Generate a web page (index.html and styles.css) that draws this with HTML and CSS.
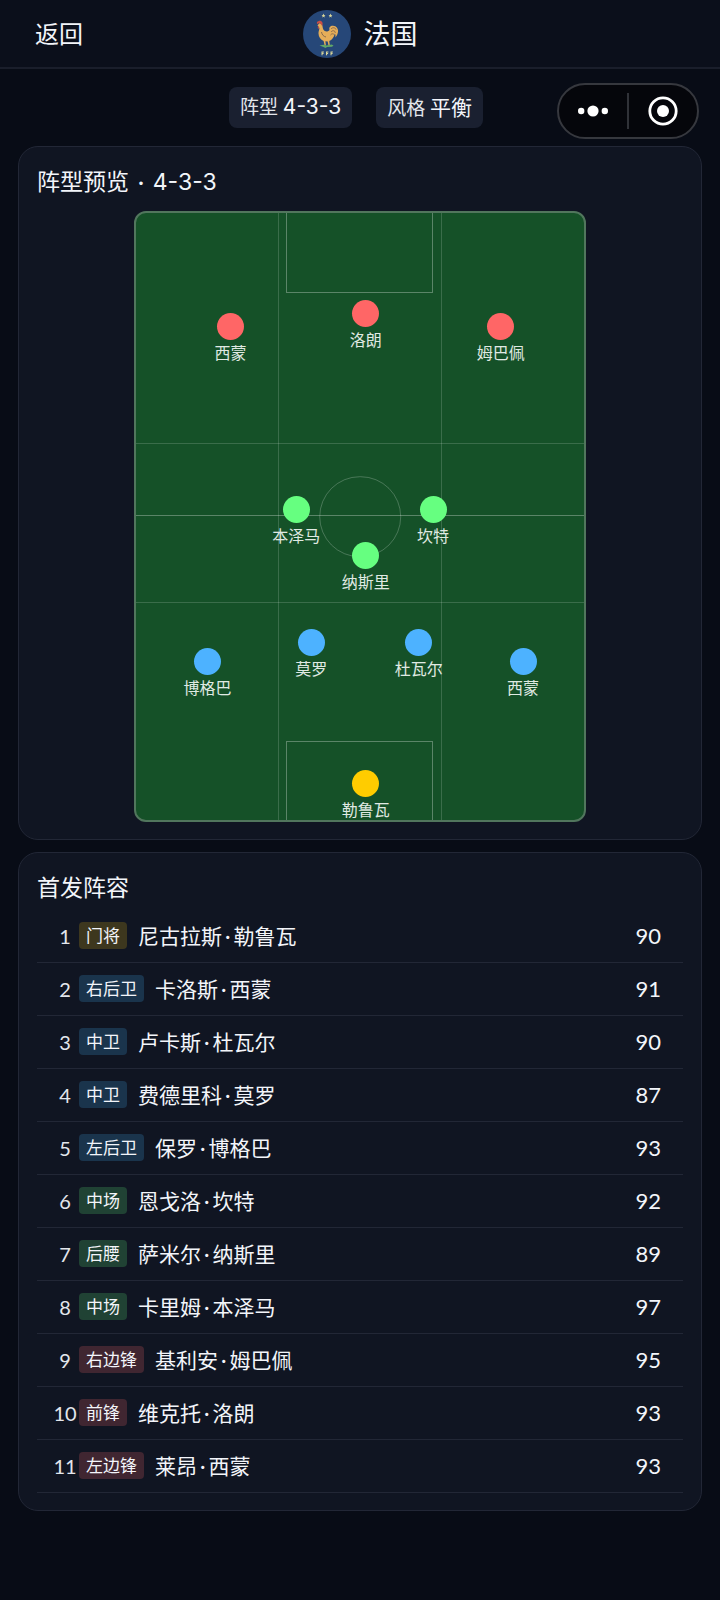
FILE: index.html
```html
<!DOCTYPE html>
<html lang="zh-CN">
<head>
<meta charset="utf-8">
<meta name="viewport" content="width=device-width, initial-scale=1">
<title>法国</title>
<link rel="stylesheet" href="styles.css">
</head>
<body>
<header class="topbar">
  <button class="back" type="button">返回</button>
  <div class="team">
    <svg class="crest" viewBox="0 0 48 48" aria-hidden="true">
      <circle cx="24" cy="24" r="24" fill="#264778"/>
      <g fill="#d9d69a">
        <path d="M20.5 3.600l.6 1.300 1.300.1-1 1 .3 1.400-1.200-.7-1.200.7.3-1.400-1-1 1.300-.1zM27.500 3.600l.6 1.300 1.300.1-1 1 .3 1.400-1.200-.7-1.200.7.3-1.400-1-1 1.300-.1z"/>
        <path d="M18.500 41.500h2.400v1h-1.300v.6h1v.8h-1v1.400h-1.100zM23 41.500h2.400v1h-1.300v.6h1v.8h-1v1.400H23zM27.500 41.500h2.400v1h-1.300v.6h1v.8h-1v1.400h-1.100z"/>
      </g>
      <path d="M14.500 15.500l2-2.500 2 .8c1.500 1.800.8 4.200 2 6 1.500 2.200 4.500 2.200 6 .2-.8-2.500.8-4.300 3.500-4.200 3.500.2 5.500 3 5 6.200-.3 2.300-1.300 4-2.600 5.400.2-1.700.1-2.900-.6-3.600-.8 3.700-2.800 6.200-5.500 7.200l.5 4.600h-1.300l-.8-4.200-2.300-.1.5 4.300h-1.300l-1-4.600c-3-1.300-5-4-5.100-7.500-.1-2.200.8-3.500.9-5.500z" fill="#e5ad59"/>
      <path d="M28 19c1.500-2 4.500-1.500 5 .6M28 22c1.500-2 4-1.600 4.300.8M27.500 25c1.200-1.500 2.600-1.500 3.400-.6M18.500 22c.4 2.600 2 4.500 4.500 5" fill="none" stroke="#8b6b4c" stroke-width="1"/>
      <path d="M14.200 14c-.8-1.200-.2-2.600 1.200-2.800 1.400-.8 3.400-.2 4 1.300.5 1.300.2 2.500-.4 3.300l-1.400-2-2-.6zM15.300 16c.8.6.9 2.200.1 3-.8-.7-.9-2-.1-3z" fill="#c94e45"/>
      <path d="M16.500 35.500l4-.8 3 .8 5-1 2 1-1.500 1.200-5 .4-1.500.8-2-1z" fill="#62a768"/>
    </svg>
    <h1 class="team-name">法国</h1>
  </div>
</header>

<div class="capsule">
  <button class="capsule-btn" type="button" aria-label="更多">
    <svg width="30" height="12" viewBox="0 0 30 12" fill="#fff"><circle cx="3.200" cy="6" r="3.200"/><circle cx="15" cy="6" r="5.600"/><circle cx="26.800" cy="6" r="3.200"/></svg>
  </button>
  <span class="capsule-rule"></span>
  <button class="capsule-btn" type="button" aria-label="关闭">
    <svg width="30" height="30" viewBox="0 0 30 30"><circle cx="15" cy="15" r="13.200" fill="none" stroke="#fff" stroke-width="2.800"/><circle cx="15" cy="15" r="6" fill="#fff"/></svg>
  </button>
</div>

<main class="page">
  <div class="chips">
    <div class="chip">阵型 <span class="chip-value formation">4-3-3</span></div>
    <div class="chip">风格 <span class="chip-value">平衡</span></div>
  </div>

  <section class="card">
    <h2 class="card-title">阵型预览 <span class="sep">·</span> <span class="formation">4-3-3</span></h2>
    <div class="pitch">
      <i class="line v" style="left:31.600%"></i>
      <i class="line v" style="left:68%"></i>
      <i class="line h" style="top:37.900%"></i>
      <i class="line h mid" style="top:49.800%"></i>
      <i class="line h" style="top:64%"></i>
      <i class="circle"></i>
      <i class="box top"></i>
      <i class="box bottom"></i>
      <div class="player fw" style="left:21.100%;top:18.600%">西蒙</div>
      <div class="player fw" style="left:51.300%;top:16.400%">洛朗</div>
      <div class="player fw" style="left:81.400%;top:18.600%">姆巴佩</div>
      <div class="player mf" style="left:35.800%;top:48.700%">本泽马</div>
      <div class="player mf" style="left:66.300%;top:48.700%">坎特</div>
      <div class="player mf" style="left:51.300%;top:56.400%">纳斯里</div>
      <div class="player df" style="left:16%;top:73.700%">博格巴</div>
      <div class="player df" style="left:39.100%;top:70.600%">莫罗</div>
      <div class="player df" style="left:63.100%;top:70.600%">杜瓦尔</div>
      <div class="player df" style="left:86.400%;top:73.700%">西蒙</div>
      <div class="player gk" style="left:51.300%;top:93.800%">勒鲁瓦</div>
    </div>
  </section>

  <section class="card">
    <h2 class="card-title" id="lineup">首发阵容</h2>
    <table class="roster" aria-labelledby="lineup">
      <tbody>
        <tr><td class="num">1</td><td><div class="who"><span class="tag gk">门将</span><span>尼古拉斯<span class="dot">·</span>勒鲁瓦</span></div></td><td class="score">90</td></tr>
        <tr><td class="num">2</td><td><div class="who"><span class="tag df">右后卫</span><span>卡洛斯<span class="dot">·</span>西蒙</span></div></td><td class="score">91</td></tr>
        <tr><td class="num">3</td><td><div class="who"><span class="tag df">中卫</span><span>卢卡斯<span class="dot">·</span>杜瓦尔</span></div></td><td class="score">90</td></tr>
        <tr><td class="num">4</td><td><div class="who"><span class="tag df">中卫</span><span>费德里科<span class="dot">·</span>莫罗</span></div></td><td class="score">87</td></tr>
        <tr><td class="num">5</td><td><div class="who"><span class="tag df">左后卫</span><span>保罗<span class="dot">·</span>博格巴</span></div></td><td class="score">93</td></tr>
        <tr><td class="num">6</td><td><div class="who"><span class="tag mf">中场</span><span>恩戈洛<span class="dot">·</span>坎特</span></div></td><td class="score">92</td></tr>
        <tr><td class="num">7</td><td><div class="who"><span class="tag mf">后腰</span><span>萨米尔<span class="dot">·</span>纳斯里</span></div></td><td class="score">89</td></tr>
        <tr><td class="num">8</td><td><div class="who"><span class="tag mf">中场</span><span>卡里姆<span class="dot">·</span>本泽马</span></div></td><td class="score">97</td></tr>
        <tr><td class="num">9</td><td><div class="who"><span class="tag fw">右边锋</span><span>基利安<span class="dot">·</span>姆巴佩</span></div></td><td class="score">95</td></tr>
        <tr><td class="num">10</td><td><div class="who"><span class="tag fw">前锋</span><span>维克托<span class="dot">·</span>洛朗</span></div></td><td class="score">93</td></tr>
        <tr><td class="num">11</td><td><div class="who"><span class="tag fw">左边锋</span><span>莱昂<span class="dot">·</span>西蒙</span></div></td><td class="score">93</td></tr>
      </tbody>
    </table>
  </section>
</main>
</body>
</html>
```
FILE: styles.css
```css
* { box-sizing: border-box; }

body {
  margin: 0;
  min-height: 100vh;
  background: #080c16;
  color: #f3f5fa;
  font-family: Lato, "Noto Sans CJK SC", sans-serif;
}

h1, h2 { margin: 0; font-weight: 400; }

button {
  padding: 0;
  border: 0;
  background: none;
  color: inherit;
  font: inherit;
}

.formation { font-family: Inter, "Noto Sans CJK SC", sans-serif; }

/* Top bar */
.topbar {
  display: grid;
  grid-template-columns: 1fr auto 1fr;
  align-items: center;
  height: 69px;
  padding: 1px 35px 0;
  border-bottom: 2px solid #1a1e2b;
  background: #0b0f1b;
}
.back { justify-self: start; font-size: 24px; line-height: 34px; }
.team { display: flex; align-items: center; gap: 13px; }
.crest { width: 48px; height: 48px; }
.team-name { font-size: 27px; line-height: 40px; }

/* Floating capsule */
.capsule {
  position: absolute;
  top: 83px;
  right: 21px;
  display: flex;
  align-items: center;
  width: 142px;
  height: 56px;
  border: 2px solid #36383e;
  border-radius: 28px;
  background: #05060b;
}
.capsule-btn { flex: 1; display: flex; align-items: center; justify-content: center; height: 100%; }
.capsule-rule { width: 2px; height: 36px; background: #303238; }

.page { display: flex; flex-direction: column; gap: 12px; padding: 18px 18px 24px; }

/* Chips */
.chips { display: flex; justify-content: center; gap: 24px; margin: 0 8px 6px 0; }
.chip {
  padding: 0 11px;
  border-radius: 8px;
  background: #1a2030;
  font-size: 19px;
  line-height: 40px;
  color: #e3e6ec;
}
.chip-value { font-size: 21px; color: #f3f5fa; }

/* Cards */
.card {
  padding: 17px 18px;
  border: 1px solid #222736;
  border-radius: 20px;
  background: #101522;
}
.card-title { font-size: 23px; line-height: 34px; }
.sep { margin: 0 3px; }

/* Pitch */
.pitch {
  position: relative;
  width: 70%;
  margin: 12px auto 0;
  aspect-ratio: 452 / 611;
  border: 2px solid #51765d;
  border-radius: 12px;
  background: #155128;
}
.line { position: absolute; background: rgba(255, 255, 255, .16); }
.line.v { top: 0; bottom: 0; width: 1px; }
.line.h { left: 0; right: 0; height: 1px; }
.line.mid { background: rgba(255, 255, 255, .3); }
.circle {
  position: absolute;
  left: 50.1%;
  top: 50%;
  width: 18.2%;
  aspect-ratio: 1;
  border: 1px solid rgba(255, 255, 255, .22);
  border-radius: 50%;
  transform: translate(-50%, -50%);
}
.box {
  position: absolute;
  left: 33.6%;
  width: 32.6%;
  height: 13.1%;
  border: 1px solid rgba(255, 255, 255, .3);
}
.box.top { top: 0; border-top: 0; }
.box.bottom { bottom: 0; border-bottom: 0; }

.player {
  position: absolute;
  display: flex;
  flex-direction: column;
  align-items: center;
  gap: 2px;
  margin-top: -13px;
  transform: translateX(-50%);
  font-size: 16px;
  line-height: 22px;
  white-space: nowrap;
  color: #e0eae3;
}
.player::before {
  content: "";
  width: 27px;
  height: 27px;
  border-radius: 50%;
}
.player.fw::before { background: #ff6666; }
.player.mf::before { background: #66ff80; }
.player.df::before { background: #4db2ff; }
.player.gk::before { background: #ffcc00; }

/* Lineup */
.roster { width: 100%; margin-top: 5px; border-collapse: collapse; font-size: 21px; }
.roster tr { height: 53px; border-bottom: 1px solid #222736; }
.roster td { padding: 0; vertical-align: middle; white-space: nowrap; line-height: 30px; }
.roster .num { width: 42px; padding-left: 14px; font-size: 20px; text-align: center; color: #e3e6ec; }
.roster .score { width: 60px; padding-right: 22px; font-size: 22px; text-align: right; }
.who { display: flex; align-items: center; gap: 11px; }
.dot { margin: 0 3px; }
.tag {
  padding: 0 7px;
  border-radius: 4px;
  font-size: 17px;
  line-height: 27px;
}
.tag.gk { background: #3d371e; }
.tag.df { background: #1a344c; }
.tag.mf { background: #204234; }
.tag.fw { background: #402631; }
```
